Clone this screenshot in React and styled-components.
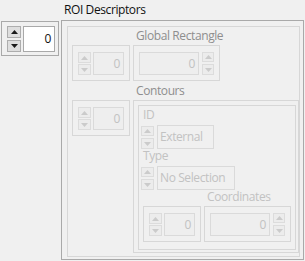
import styled, { createGlobalStyle } from 'styled-components';

const GlobalStyle = createGlobalStyle`
  body {
    margin: 0;
    background: #f0f0f0;
    font-family: "Open Sans", "Noto Sans", sans-serif;
    font-size: 12px;
    letter-spacing: -0.4px;
  }
`;

const Panel = styled.div`
  display: flex;
  align-items: flex-start;
  gap: 2px;
  width: 305px;
  height: 261px;
  padding-left: 1px;
  box-sizing: border-box;
`;

const IndexBox = styled.div`
  box-sizing: border-box;
  flex-shrink: 0;
  display: flex;
  gap: 2px;
  width: 58px;
  height: ${(p) => (p.$disabled ? 36 : 35)}px;
  margin-top: ${(p) => p.$top || 0}px;
  padding: ${(p) => (p.$disabled ? '6px 5px 5px 5px' : '4px 3px 3px 5px')};
  border: 1px solid ${(p) => (p.$disabled ? '#d7d7d7' : '#a9a9a9')};
`;

const SpinColumn = styled.div`
  display: flex;
  flex-direction: column;
  justify-content: space-between;
  flex-shrink: 0;
  width: ${(p) => p.$width || 13}px;
  padding-top: ${(p) => p.$offset || 0}px;
  box-sizing: border-box;
`;

const SpinButton = styled.div`
  box-sizing: border-box;
  display: flex;
  align-items: center;
  justify-content: center;
  height: ${(p) => p.$height || 11}px;
  border: 1px solid ${(p) => (p.$disabled ? '#dcdcdc' : '#adadad')};
  background: ${(p) => (p.$disabled ? '#ececec' : '#dedede')};
  color: ${(p) => (p.$disabled ? '#cbcbcb' : '#1a1a1a')};
`;

const ValueBox = styled.div`
  box-sizing: border-box;
  flex: ${(p) => (p.$width ? '0 0 auto' : 1)};
  width: ${(p) => (p.$width ? `${p.$width}px` : 'auto')};
  height: 100%;
  display: flex;
  align-items: center;
  justify-content: flex-end;
  padding-right: 3px;
  border: 1px solid ${(p) => (p.$disabled ? '#dadada' : '#a9a9a9')};
  background: ${(p) => (p.$disabled ? '#eeeeee' : '#ffffff')};
  color: ${(p) => (p.$disabled ? '#c2c2c2' : '#111111')};
  font-size: 12px;
  line-height: 14px;
`;

const ArrayColumn = styled.div`
  display: flex;
  flex-direction: column;
`;

const TopLabel = styled.div`
  height: 20px;
  line-height: 20px;
  padding-left: 3px;
  color: #111111;
  font-size: 12px;
`;

const OuterFrame = styled.div`
  box-sizing: border-box;
  width: 243px;
  height: 240px;
  padding: 5px 3px 3px 5px;
  border: 1px solid #a9a9a9;
`;

const Cluster = styled.div`
  box-sizing: border-box;
  display: flex;
  flex-direction: column;
  width: ${(p) => p.$w}px;
  height: ${(p) => p.$h}px;
  padding: ${(p) => p.$pad};
  gap: ${(p) => p.$gap || 0}px;
  border: 1px solid #d7d7d7;
`;

const ArrayGrid = styled.div`
  display: grid;
  grid-template-columns: 58px auto;
  column-gap: 3px;
  align-items: start;
  margin-left: ${(p) => p.$indent || 0}px;
`;

const ArrayLabel = styled.div`
  grid-column: 2;
  height: 16px;
  line-height: 14px;
  padding-left: 3px;
  color: ${(p) => p.$color};
  font-size: 12px;
  white-space: nowrap;
`;

const ElementBox = styled.div`
  box-sizing: border-box;
  display: flex;
  gap: 3px;
  width: ${(p) => p.$w}px;
  height: ${(p) => p.$h}px;
  padding: ${(p) => p.$pad};
  border: 1px solid #d7d7d7;
`;

const FieldLabel = styled.div`
  height: 17px;
  line-height: 14px;
  padding-left: 2px;
  color: #c2c2c2;
  font-size: 12px;
`;

const RingRow = styled.div`
  display: flex;
  gap: 3px;
  height: 24px;
`;

const RingBox = styled.div`
  box-sizing: border-box;
  width: ${(p) => p.$w}px;
  height: 24px;
  padding-left: 2px;
  line-height: 22px;
  border: 1px solid #dadada;
  color: #c2c2c2;
  font-size: 12px;
  white-space: nowrap;
`;

function Arrow({ down }) {
  return (
    <svg width="7" height="4" viewBox="0 0 7 4">
      <polygon points={down ? '0,0 7,0 3.5,4' : '0,4 7,4 3.5,0'} fill="currentColor" />
    </svg>
  );
}

function Spinner({ disabled, width, offset, heights = [11, 11] }) {
  return (
    <SpinColumn $width={width} $offset={offset}>
      <SpinButton $disabled={disabled} $height={heights[0]}>
        <Arrow />
      </SpinButton>
      <SpinButton $disabled={disabled} $height={heights[1]}>
        <Arrow down />
      </SpinButton>
    </SpinColumn>
  );
}

function Index({ disabled, top }) {
  return (
    <IndexBox $disabled={disabled} $top={top}>
      {disabled ? <Spinner disabled /> : <Spinner width={14} heights={[12, 12]} />}
      <ValueBox $disabled={disabled}>0</ValueBox>
    </IndexBox>
  );
}

function NumericElement() {
  return (
    <ElementBox $w={87} $h={36} $pad="6px 5px 5px 5px">
      <ValueBox $disabled $width={60}>0</ValueBox>
      <Spinner disabled width={12} heights={[10, 11]} />
    </ElementBox>
  );
}

function Ring({ label, value, width }) {
  return (
    <>
      <FieldLabel>{label}</FieldLabel>
      <RingRow>
        <Spinner disabled offset={1} heights={[10, 11]} />
        <RingBox $w={width}>{value}</RingBox>
      </RingRow>
    </>
  );
}

export default function App() {
  return (
    <>
      <GlobalStyle />
      <Panel>
        <Index top={21} />
        <ArrayColumn>
          <TopLabel>ROI Descriptors</TopLabel>
          <OuterFrame>
            <Cluster $w={233} $h={231} $pad="2px 0 0 4px" $gap={3}>
              <ArrayGrid>
                <ArrayLabel $color="#8e8e8e">Global Rectangle</ArrayLabel>
                <Index disabled />
                <NumericElement />
              </ArrayGrid>
              <ArrayGrid>
                <ArrayLabel $color="#8e8e8e">Contours</ArrayLabel>
                <Index disabled />
                <ElementBox $w={166} $h={153} $pad="4px 2px 2px 4px">
                  <Cluster $w={158} $h={145} $pad="2px 0 0 2px">
                    <Ring label="ID" value="External" width={57} />
                    <Ring label="Type" value="No Selection" width={78} />
                    <ArrayGrid $indent={2}>
                      <ArrayLabel $color="#c2c2c2">Coordinates</ArrayLabel>
                      <Index disabled />
                      <NumericElement />
                    </ArrayGrid>
                  </Cluster>
                </ElementBox>
              </ArrayGrid>
            </Cluster>
          </OuterFrame>
        </ArrayColumn>
      </Panel>
    </>
  );
}
